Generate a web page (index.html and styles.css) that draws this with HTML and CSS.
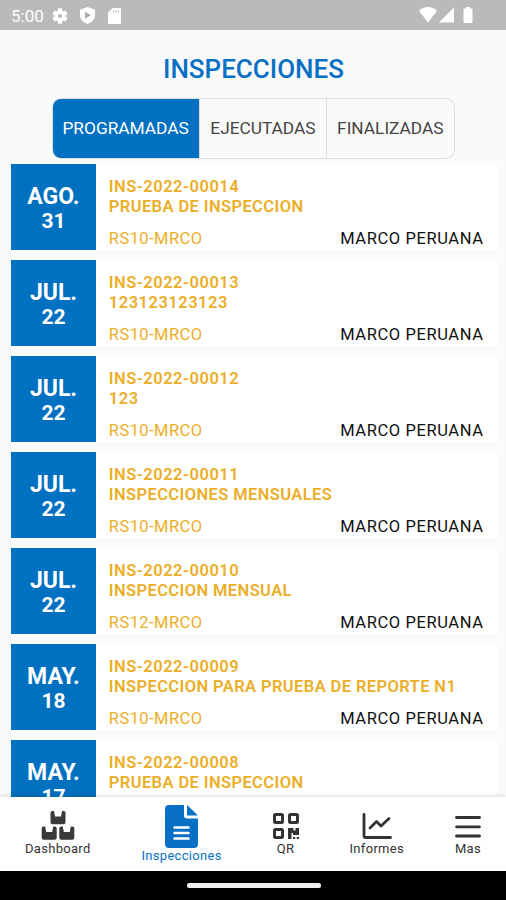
FILE: index.html
```
<!DOCTYPE html>
<html lang="es">
<head>
  <meta charset="UTF-8" />
  <title>Inspecciones</title>
  <link rel="stylesheet" href="styles.css">
</head>
<body>
  <div class="status-bar">
    <span class="clock">5:00</span>
    <svg class="st-gear" width="16" height="16" viewBox="2 2 20 20"><path fill="#fff" d="M19.14 12.94c.04-.3.06-.61.06-.94s-.02-.64-.07-.94l2.03-1.58a.49.49 0 0 0 .12-.61l-1.92-3.32a.49.49 0 0 0-.59-.22l-2.39.96a7 7 0 0 0-1.62-.94l-.36-2.54a.48.48 0 0 0-.48-.41h-3.84c-.24 0-.43.17-.47.41l-.36 2.54c-.59.24-1.13.57-1.62.94l-2.39-.96a.48.48 0 0 0-.59.22L2.74 8.87a.48.48 0 0 0 .12.61l2.03 1.58c-.05.3-.09.63-.09.94s.02.64.07.94l-2.03 1.58a.49.49 0 0 0-.12.61l1.92 3.32c.12.22.37.29.59.22l2.39-.96c.5.38 1.03.7 1.62.94l.36 2.54c.05.24.24.41.48.41h3.84c.24 0 .44-.17.47-.41l.36-2.54a7 7 0 0 0 1.62-.94l2.39.96c.22.08.47 0 .59-.22l1.92-3.32a.48.48 0 0 0-.12-.61zM12 14.6a2.6 2.6 0 1 1 0-5.2 2.6 2.6 0 0 1 0 5.2z"/></svg>
    <svg class="st-shield" width="15" height="17" viewBox="0 0 15 17"><path fill="#fff" d="M7.500 0L15 2.700V8c0 4-3 7.500-7.500 9C3 15.500 0 12 0 8V2.700z"/><path fill="#aaa" d="M5 4.700v7L11 8.200z"/></svg>
    <svg class="st-card" width="13" height="16" viewBox="0 0 13 16"><path fill="#fff" d="M4.500 0H12a1 1 0 0 1 1 1v14a1 1 0 0 1-1 1H1a1 1 0 0 1-1-1V4.500z"/><path stroke="#ccc" stroke-width="1.200" d="M5.600 2v2.500M8 2v2.500M10.400 2v2.500"/></svg>
    <svg class="st-right" width="54" height="17" viewBox="0 0 54 17"><path fill="#fff" d="M0 3.800C5-1.200 13-1.200 18 3.800L9 15.500zM35 .5V15.500H20zM45.500 1.500H47V0h4v1.500h1.500a1 1 0 0 1 1 1v12.500a1 1 0 0 1-1 1h-7a1 1 0 0 1-1-1V2.500a1 1 0 0 1 1-1z"/></svg>
  </div>

  <div class="content">
    <h1>INSPECCIONES</h1>
    <div class="tabs">
      <div class="tab active">PROGRAMADAS</div>
      <div class="tab">EJECUTADAS</div>
      <div class="tab">FINALIZADAS</div>
    </div>

    <div class="list">
      <div class="card">
        <div class="date"><span class="month">AGO.</span><span class="day">31</span></div>
        <div class="info">
          <div class="code">INS-2022-00014</div>
          <div class="name">PRUEBA DE INSPECCION</div>
          <div class="bottom"><span class="ref">RS10-MRCO</span><span class="client">MARCO PERUANA</span></div>
        </div>
      </div>
      <div class="card">
        <div class="date"><span class="month">JUL.</span><span class="day">22</span></div>
        <div class="info">
          <div class="code">INS-2022-00013</div>
          <div class="name digits">123123123123</div>
          <div class="bottom"><span class="ref">RS10-MRCO</span><span class="client">MARCO PERUANA</span></div>
        </div>
      </div>
      <div class="card">
        <div class="date"><span class="month">JUL.</span><span class="day">22</span></div>
        <div class="info">
          <div class="code">INS-2022-00012</div>
          <div class="name digits">123</div>
          <div class="bottom"><span class="ref">RS10-MRCO</span><span class="client">MARCO PERUANA</span></div>
        </div>
      </div>
      <div class="card">
        <div class="date"><span class="month">JUL.</span><span class="day">22</span></div>
        <div class="info">
          <div class="code">INS-2022-00011</div>
          <div class="name">INSPECCIONES MENSUALES</div>
          <div class="bottom"><span class="ref">RS10-MRCO</span><span class="client">MARCO PERUANA</span></div>
        </div>
      </div>
      <div class="card">
        <div class="date"><span class="month">JUL.</span><span class="day">22</span></div>
        <div class="info">
          <div class="code">INS-2022-00010</div>
          <div class="name">INSPECCION MENSUAL</div>
          <div class="bottom"><span class="ref">RS12-MRCO</span><span class="client">MARCO PERUANA</span></div>
        </div>
      </div>
      <div class="card">
        <div class="date"><span class="month">MAY.</span><span class="day">18</span></div>
        <div class="info">
          <div class="code">INS-2022-00009</div>
          <div class="name">INSPECCION PARA PRUEBA DE REPORTE N1</div>
          <div class="bottom"><span class="ref">RS10-MRCO</span><span class="client">MARCO PERUANA</span></div>
        </div>
      </div>
      <div class="card">
        <div class="date"><span class="month">MAY.</span><span class="day">17</span></div>
        <div class="info">
          <div class="code">INS-2022-00008</div>
          <div class="name">PRUEBA DE INSPECCION</div>
        </div>
      </div>
    </div>
  </div>

  <div class="nav">
    <div class="nav-item boxes">
      <svg width="34" height="30" viewBox="0 0 34 30"><g fill="#3a3a3a"><path id="box" d="M11.300 0H13l1 5.500h6L21 0h1.700a1.800 1.800 0 0 1 1.800 1.800v9.400a2 2 0 0 1-2 2h-11a2 2 0 0 1-2-2V1.800A1.800 1.800 0 0 1 11.300 0z"/><use href="#box" x="-8.800" y="15.500"/><use href="#box" x="8.800" y="15.500"/></g></svg>
      <span>Dashboard</span>
    </div>
    <div class="nav-item active">
      <svg width="33" height="43" viewBox="0 0 33 43"><path fill="#0870c4" d="M4 0H19v10.500A3 3 0 0 0 22 13.500H33V39a4 4 0 0 1-4 4H4a4 4 0 0 1-4-4V4a4 4 0 0 1 4-4z"/><path fill="#0870c4" d="M22 0L33 10.500H22z"/><path stroke="#fff" stroke-width="2.500" stroke-linecap="round" d="M9.500 22.500H23.500M9.500 28H23.500M9.500 33.500H23.500"/></svg>
      <span>Inspecciones</span>
    </div>
    <div class="nav-item">
      <svg width="26" height="26" viewBox="0 0 26 26"><g fill="none" stroke="#333" stroke-width="3"><rect x="1.500" y="1.500" width="8" height="8" rx="1"/><rect x="16.500" y="1.500" width="8" height="8" rx="1"/><rect x="1.500" y="16.500" width="8" height="8" rx="1"/></g><path fill="#333" d="M15 15h5.500v2.500h2V15H26v7h-6v-2h-1.500v6H15zM20 24h2.200v2H20zM23.800 24H26v2h-2.200z"/></svg>
      <span>QR</span>
    </div>
    <div class="nav-item">
      <svg width="30" height="26" viewBox="0 0 30 26"><path fill="none" stroke="#333" stroke-width="2.800" stroke-linecap="round" stroke-linejoin="round" d="M2 1.500V23a1.500 1.500 0 0 0 1.500 1.500H28.500M8 15L14.500 8.500L19 13L27 5.500"/></svg>
      <span>Informes</span>
    </div>
    <div class="nav-item">
      <svg width="26" height="24" viewBox="0 0 26 24"><path stroke="#333" stroke-width="2.800" stroke-linecap="round" d="M1.500 2.500H24.500M1.500 11.800H24.500M1.500 21H24.500"/></svg>
      <span>Mas</span>
    </div>
  </div>

  <div class="system-bar"><div class="handle"></div></div>
</body>
</html>
```
FILE: styles.css
```
* {
  box-sizing: border-box;
}
body {
  margin: 0;
  height: 900px;
  display: flex;
  flex-direction: column;
  overflow: hidden;
  font-family: Roboto, sans-serif;
  background-color: #fafafa;
}
.status-bar {
  height: 30px;
  flex: none;
  display: flex;
  align-items: center;
  padding: 1px 33px 0 11px;
  background-color: #bababa;
  color: #fff;
}
.clock {
  width: 33px;
  font-size: 17px;
}
.st-gear {
  margin-left: 8px;
}
.st-shield {
  margin-left: 12px;
}
.st-card {
  margin-left: 13px;
}
.st-right {
  margin-left: auto;
}
.content {
  flex: 1;
  min-height: 0;
  overflow: hidden;
}
h1 {
  margin: 24px 0 12.500px;
  padding-left: 1px;
  text-align: center;
  font-size: 26px;
  line-height: 31px;
  font-weight: 500;
  color: #0870c4;
}
.tabs {
  display: flex;
  width: 403px;
  height: 61px;
  margin: 0 auto;
  border: 1px solid #dedede;
  border-radius: 9px;
  overflow: hidden;
}
.tab {
  width: 128px;
  display: flex;
  align-items: center;
  justify-content: center;
  border-left: 1px solid #dedede;
  font-size: 17.300px;
  color: #444;
}
.tab.active {
  width: 147px;
  border-left: none;
  background-color: #0070c0;
  color: #fff;
}
.list {
  display: flex;
  flex-direction: column;
  gap: 10px;
  padding: 5.800px 9.400px 0 10.600px;
}
.card {
  display: flex;
  height: 86px;
  flex: none;
  background-color: #fff;
}
.date {
  width: 85.700px;
  display: flex;
  flex-direction: column;
  align-items: center;
  padding-top: 19px;
  background-color: #0070c0;
  color: #fff;
  font-weight: 700;
}
.month {
  font-size: 23px;
  line-height: 27px;
}
.day {
  font-size: 21px;
  line-height: 23px;
}
.info {
  flex: 1;
  padding: 13px 13px 0 12.500px;
  font-size: 16.500px;
  line-height: 19.500px;
  color: #ebae28;
}
.code, .name {
  font-weight: 600;
  letter-spacing: 0.400px;
  white-space: nowrap;
}
.code, .digits {
  letter-spacing: 0.500px;
}
.bottom {
  display: flex;
  justify-content: space-between;
  margin-top: 12.500px;
}
.ref {
  letter-spacing: 0.450px;
}
.client {
  letter-spacing: 0.600px;
  color: #111;
}
.nav {
  position: relative;
  height: 74px;
  flex: none;
  display: flex;
  justify-content: space-between;
  padding: 0 25px;
  background-color: #fff;
  box-shadow: 0 -1px 5px rgba(0,0,0,0.15);
}
.nav-item {
  display: flex;
  flex-direction: column;
  align-items: center;
  justify-content: flex-end;
  padding-bottom: 14px;
  font-size: 13px;
  line-height: 16px;
  letter-spacing: 0.300px;
  color: #333;
}
.nav-item svg {
  margin-bottom: 2px;
}
.nav-item.boxes svg {
  margin-bottom: 0;
}
.nav-item.active {
  padding-bottom: 7px;
  color: #0870c4;
}
.nav-item.active svg {
  margin-bottom: 0;
}
.system-bar {
  height: 29px;
  flex: none;
  display: flex;
  justify-content: center;
  padding: 12px 0 0 1px;
  background-color: #000;
}
.handle {
  width: 134px;
  height: 5px;
  border-radius: 2px;
  background-color: #eee;
}
```
